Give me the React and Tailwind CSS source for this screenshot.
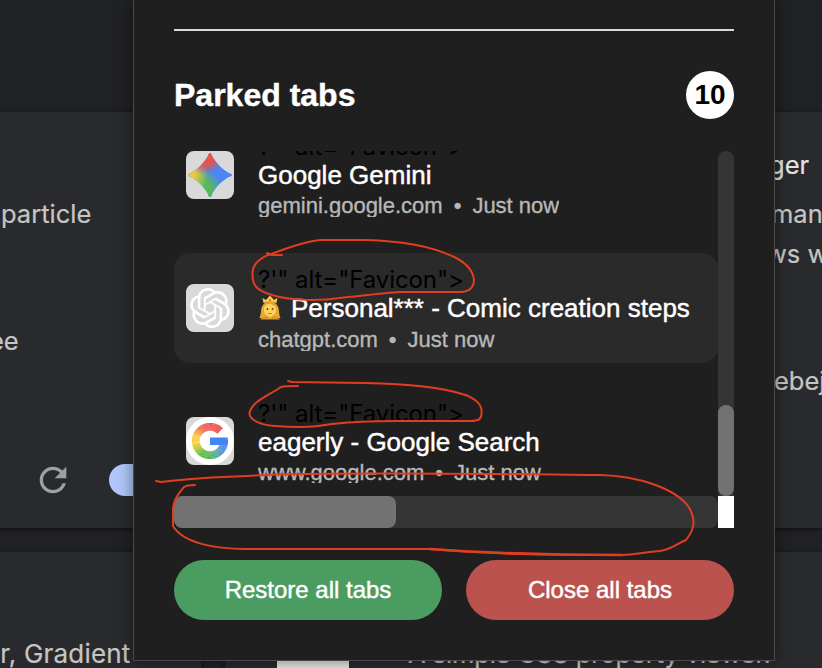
import React from "react";
import { SiOpenai } from "react-icons/si";
import { MdRefresh } from "react-icons/md";

function mix(a, b, t) {
  return `rgb(${a.map((v, i) => Math.round(v + (b[i] - v) * t)).join(",")})`;
}

// Ring colours of the G, by angle in degrees (clockwise from the right).
const STOPS = [
  [0, [66, 133, 244]],
  [30, [72, 138, 238]],
  [60, [75, 165, 150]],
  [85, [76, 178, 90]],
  [125, [95, 187, 60]],
  [150, [190, 200, 50]],
  [172, [250, 210, 60]],
  [200, [250, 200, 65]],
  [225, [240, 125, 65]],
  [250, [233, 86, 80]],
  [330, [238, 75, 75]],
];

function colorAt(deg) {
  for (let i = 1; i < STOPS.length; i++) {
    if (deg <= STOPS[i][0]) {
      const [a, ca] = STOPS[i - 1];
      const [b, cb] = STOPS[i];
      return mix(ca, cb, (deg - a) / (b - a));
    }
  }
  return mix(STOPS[10][1], STOPS[10][1], 0);
}

function GoogleIcon() {
  const r = 14.2;
  const segs = [];
  for (let d = 0; d < 315; d += 3) {
    const a = (d * Math.PI) / 180;
    const b = ((d + 3.6) * Math.PI) / 180;
    segs.push(
      <path
        key={d}
        d={`M${24 + r * Math.cos(a)} ${24 + r * Math.sin(a)}A${r} ${r} 0 0 1 ${24 + r * Math.cos(b)} ${24 + r * Math.sin(b)}`}
        stroke={colorAt(d)}
        strokeWidth="7.8"
        fill="none"
      />
    );
  }
  return (
    <svg viewBox="0 0 48 48" className="size-12">
      <circle cx="24" cy="24" r="24" fill="#fff" />
      {segs}
      <path d="M24 20.4H41.7L42 24L40.5 28H24Z" fill="#4285f4" />
    </svg>
  );
}

function GeminiIcon() {
  const star =
    "M24 2C25 2 25.4 3 25.8 4.6C29.800 12.100 35.900 18.200 43.400 22.200C45 22.6 46 23 46 24S45 25.4 43.400 25.800C35.900 29.800 29.800 35.900 25.800 43.400C25.4 45 25 46 24 46S22.6 45 22.200 43.400C18.200 35.900 12.100 29.800 4.600 25.800C3 25.4 2 25 2 24S3 22.6 4.600 22.200C12.100 18.200 18.200 12.100 22.200 4.600C22.6 3 23 2 24 2Z";
  return (
    <svg viewBox="0 0 48 48" className="size-12">
      <defs>
        <radialGradient id="gy" gradientUnits="userSpaceOnUse" cx="2" cy="24" r="20">
          <stop offset="0.35" stopColor="#f0c840" />
          <stop offset="1" stopColor="#d8d83c" stopOpacity="0" />
        </radialGradient>
        <radialGradient id="gr" gradientUnits="userSpaceOnUse" cx="19" cy="3" r="20">
          <stop offset="0.5" stopColor="#e8534c" />
          <stop offset="1" stopColor="#e8534c" stopOpacity="0" />
        </radialGradient>
        <radialGradient id="gg" gradientUnits="userSpaceOnUse" cx="15" cy="39" r="22">
          <stop offset="0.45" stopColor="#56b85a" />
          <stop offset="1" stopColor="#5cb86a" stopOpacity="0" />
        </radialGradient>
      </defs>
      <path d={star} fill="#4a86f5" />
      <path d={star} fill="url(#gg)" />
      <path d={star} fill="url(#gy)" />
      <path d={star} fill="url(#gr)" />
    </svg>
  );
}

function Princess() {
  return (
    <svg viewBox="0 0 24 26" className="mr-[9px] inline-block h-[26px] w-6 shrink-0">
      <path d="M5 10C2 14 4 17 1.500 23H22.500C20 17 22 14 19 10C16 6 8 6 5 10Z" fill="#e9a82c" />
      <path d="M2 24.500C4 22 8 21 12 21S20 22 22 24.500Z" fill="#d9962a" />
      <path d="M9.500 19H14.500V22L12 24L9.500 22Z" fill="#e8b04a" />
      <ellipse cx="12" cy="14.500" rx="6.200" ry="7.200" fill="#fcd25c" />
      <path d="M5.500 14C6 9 10 9.500 12.500 8.500C14 10 18 10 18.600 14C20 9 17 6.500 12 6.500S4 9 5.500 14Z" fill="#e5a028" />
      <path d="M5.500 8L4.500 3L8 5L12 0.500L16 5L19.500 3L18.500 8C15 6.400 9 6.400 5.500 8Z" fill="#f7d04a" />
      <circle cx="12" cy="5" r="1" fill="#d85a3a" />
      <circle cx="9.400" cy="14" r="0.900" fill="#5a3a1c" />
      <circle cx="14.600" cy="14" r="0.900" fill="#5a3a1c" />
      <path d="M9.800 18C11 19.200 13 19.200 14.200 18Z" fill="#c8463a" />
    </svg>
  );
}

function TabRow({ icon, title, host, active, emoji, textClass = "h-[86px]", hostClass = "mt-[5px]" }) {
  return (
    <div className={`flex h-[110px] shrink-0 items-center gap-6 rounded-2xl px-3 ${active ? "bg-[#2a2a2a]" : ""}`}>
      <div className="size-12 shrink-0 overflow-hidden rounded-lg bg-[#d9d9d9]">{icon}</div>
      <div className={`flex flex-col whitespace-nowrap ${textClass}`}>
        <div className="h-[28px] font-['Inter',sans-serif] text-[24px] leading-[30px] tracking-[-0.08px] text-black">
          ?'" alt="Favicon"&gt;
        </div>
        <div className="flex h-[30px] items-center text-[26px] leading-[30px] text-white [-webkit-text-stroke:0.45px]">
          {emoji && <Princess />}
          {title}
        </div>
        <div className={`h-[23px] overflow-hidden text-[22px] leading-[23px] text-[#b8b8b8] [-webkit-text-stroke:0.35px] ${hostClass}`}>
          {host}
          <span className="mx-[11px]">•</span>Just now
        </div>
      </div>
    </div>
  );
}

function Backdrop() {
  return (
    <div className="flex h-full flex-col gap-6 font-['Inter',sans-serif] text-[25.5px] leading-8 whitespace-nowrap text-[#c5c6c2] [-webkit-text-stroke:0.2px]">
      <div className="-mb-6 h-[112px] shrink-0" />
      <div className="flex h-[416px] shrink-0 gap-6">
        <div className="flex w-[201px] flex-col bg-[#292a2d] shadow-[0_1px_5px_#0009]">
          <div className="mt-[86px] pl-px">particle</div>
          <div className="mt-[95px] -ml-[11px]">ee</div>
          <div className="mt-[103px] flex items-center">
            <MdRefresh className="ml-[33px] size-10 text-[#9aa0a6]" />
            <div className="ml-9 h-8 w-[70px] rounded-full bg-[#aec6f8]" />
          </div>
        </div>
        <div className="flex flex-1 flex-col overflow-hidden bg-[#292a2d] pl-[544px] shadow-[0_1px_5px_#0009]">
          <div className="mt-[37px] text-[#e3e3e3]">ger</div>
          <div className="mt-[17px] pl-[2px]">manage</div>
          <div className="mt-[8px] -ml-[3px]">ws with</div>
          <div className="mt-[95px] pl-[5px]">ebeja</div>
        </div>
      </div>
      <div className="flex h-[116px] shrink-0 gap-6">
        <div className="w-[201px] bg-[#292a2d] shadow-[0_1px_5px_#0009]">
          <div className="mt-[86px] -ml-[15px] text-[26px] tracking-[0.2px]">er, Gradient</div>
        </div>
        <div className="flex flex-1 items-start bg-[#292a2d] shadow-[0_1px_5px_#0009]">
          <div className="mt-[100px] ml-[52px] h-4 w-[72px] bg-[#e4e4e0]" />
          <div className="mt-[86px] ml-[59px] tracking-[-0.1px]">A simple CSS property viewer.</div>
        </div>
      </div>
    </div>
  );
}

function Annotations() {
  return (
    <svg viewBox="0 0 822 668" className="pointer-events-none absolute inset-0 size-full" fill="none" stroke="#e03e20" strokeWidth="2" strokeLinecap="round" strokeLinejoin="round">
      <path d="M267 253L272 255L282 255M271 254C288 248 302 242 320 240L365 240C402 241 436 247 458 259C472 267 477 279 472 287C468 293 460 292 452 292H400C384 293 360 296 340 298C320 301 292 301 272 295C258 291 252 286 252.500 274C252 264 261 257 271 254" />
      <path d="M288 381L292 382L365 383C405 384 440 387 462 394C476 398 482 405 481.500 412C482 419 479 421 470 421H400C370 421 345 422 325 425C310 428 290 427 275 426C257 425 249 418 249.500 413C252 401 268 396 281 387C285 386 290 386 298 386" />
      <path d="M156 481L161 482C195 477 230 477 265 475C350 472 500 474 600 475C640 476 675 489 688 506C697 520 694 530 686 540C678 543 672 549 660 551C645 552 635 555 622 555C560 555 500 555 430 549H245C215 549 183 543 173 526V510C173 500 179 493 184 487C187 485 190 485 195 485" />
      <path d="M430 549C500 554 560 555 622 555" strokeWidth="2.500" />
    </svg>
  );
}

export default function App() {
  return (
    <div className="relative h-[668px] w-[822px] overflow-hidden bg-[#202124]">
      <Backdrop />
      <div className="absolute top-0 left-[133px] flex h-[661px] w-[642px] flex-col border border-t-0 border-[#4a4a4a] bg-[#1f1f1f] px-10 font-['Liberation_Sans',Arial,sans-serif] shadow-[0_0_14px_#0007]">
        <div className="mt-[29px] h-[2px] shrink-0 bg-[#dcd8da]" />
        <div className="mt-10 flex h-12 shrink-0 items-center justify-between">
          <h1 className="text-[32px] leading-9 font-bold text-white [-webkit-text-stroke:0.4px]">Parked tabs</h1>
          <span className="flex size-12 items-center justify-center rounded-full bg-white text-[28px] leading-8 font-bold text-black">10</span>
        </div>
        <div className="mt-8 flex h-[345px] shrink-0">
          <div className="flex w-[544px] flex-col overflow-hidden">
            <div className="-mt-[31px] flex flex-col gap-[23px]">
              <TabRow icon={<GeminiIcon />} title="Google Gemini" host="gemini.google.com" hostClass="mt-1" />
              <TabRow icon={<SiOpenai className="m-1 size-10 text-white" />} title="Personal*** - Comic creation steps" host="chatgpt.com" active emoji />
              <TabRow icon={<GoogleIcon />} title="eagerly - Google Search" host="www.google.com" textClass="h-[84px]" hostClass="mt-1" />
            </div>
          </div>
          <div className="flex w-4 flex-col justify-end rounded-t-full bg-[#353535]">
            <div className="h-[91px] rounded-full bg-[#727272]" />
          </div>
        </div>
        <div className="flex h-8 shrink-0">
          <div className="w-[544px] rounded-lg bg-[#353535]">
            <div className="h-8 w-[222px] rounded-lg bg-[#727272]" />
          </div>
          <div className="w-4 bg-white" />
        </div>
        <div className="mt-8 flex h-[60px] shrink-0 gap-6 text-[24px] text-white [-webkit-text-stroke:0.45px]">
          <button className="flex-1 rounded-full bg-[#4b9c60]">Restore all tabs</button>
          <button className="flex-1 rounded-full bg-[#bb524d]">Close all tabs</button>
        </div>
      </div>
      <Annotations />
    </div>
  );
}
